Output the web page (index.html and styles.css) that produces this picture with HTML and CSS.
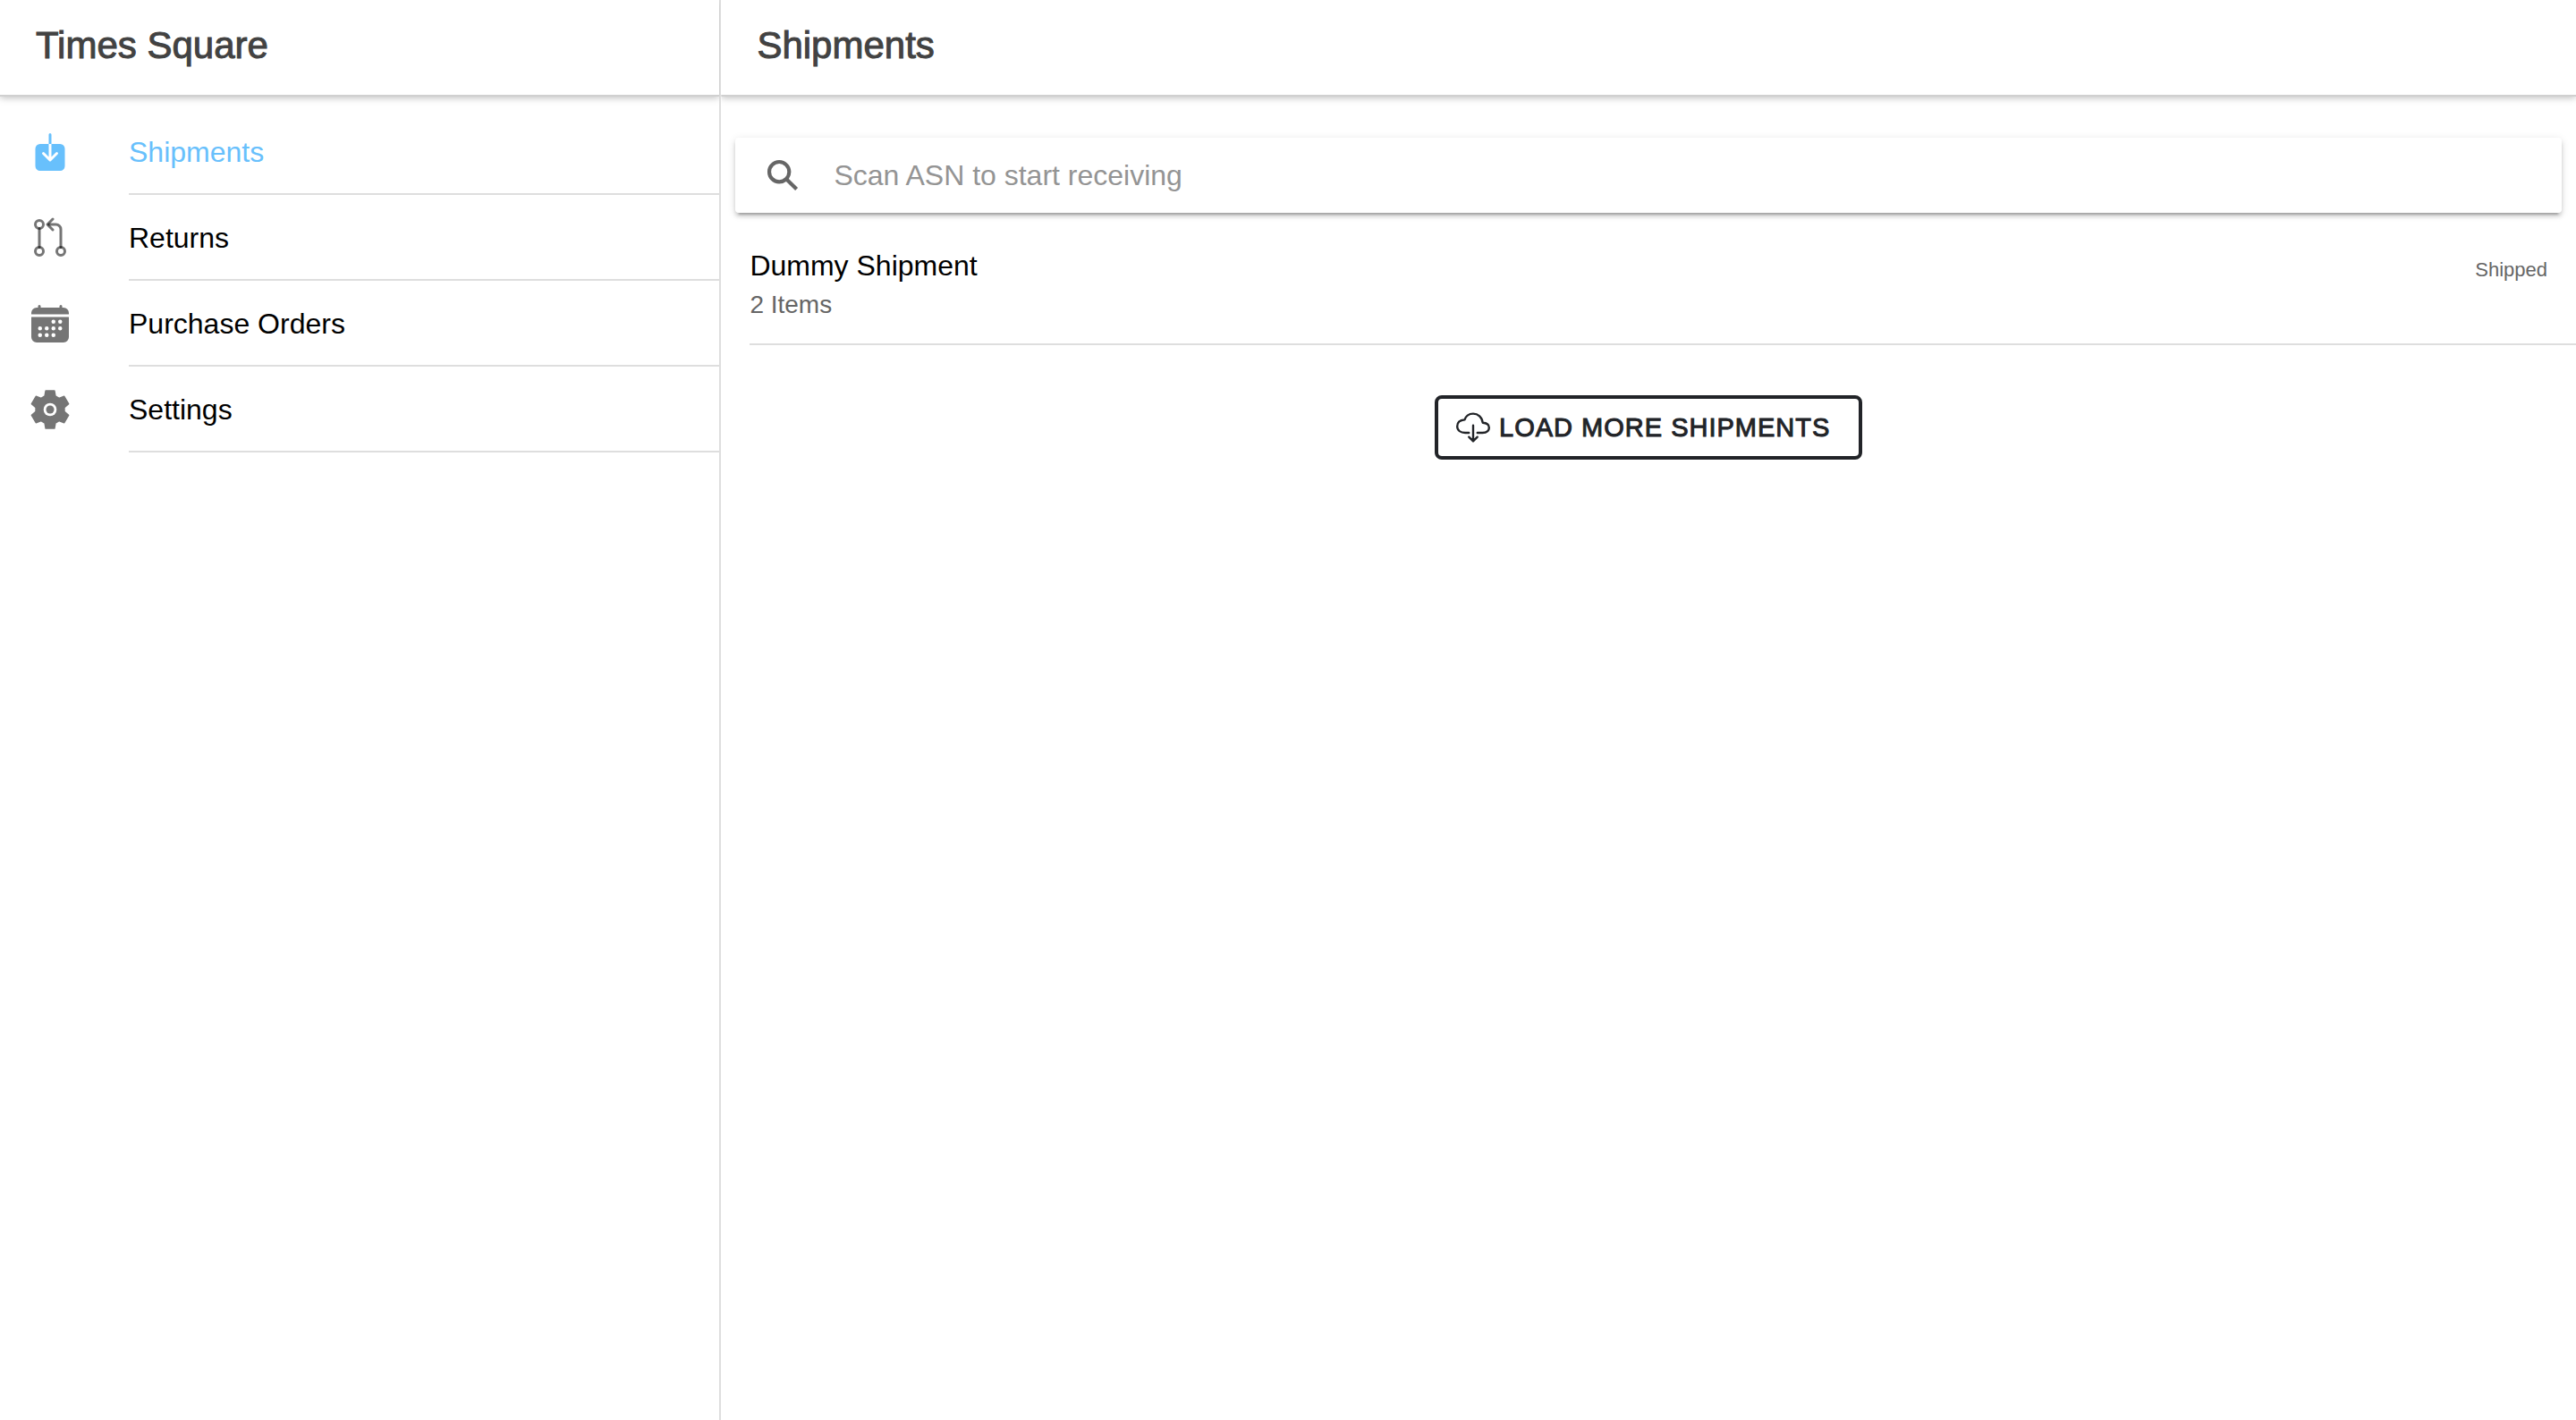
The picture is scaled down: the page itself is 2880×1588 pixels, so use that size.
FILE: index.html
```html
<!DOCTYPE html>
<html lang="en">
<head>
<meta charset="utf-8">
<meta name="viewport" content="width=device-width, initial-scale=1">
<title>Shipments</title>
<link rel="stylesheet" href="styles.css">
</head>
<body>
<div class="app">
  <aside class="sidebar">
    <header class="toolbar"><h2 class="toolbar-title">Times Square</h2></header>
    <nav class="menu">
      <a class="menu-item menu-item-active" href="#shipments">
        <svg class="menu-icon" viewBox="0 0 512 512" fill="currentColor" aria-hidden="true"><path d="M376 160H272v153.37l52.69-52.68a16 16 0 0122.62 22.62l-80 80a16 16 0 01-22.62 0l-80-80a16 16 0 0122.62-22.62L240 313.37V160H136a56.06 56.06 0 00-56 56v208a56.06 56.06 0 0056 56h240a56.06 56.06 0 0056-56V216a56.06 56.06 0 00-56-56zM272 48a16 16 0 00-32 0v112h32z"/></svg>
        <span class="menu-label">Shipments</span>
      </a>
      <a class="menu-item" href="#returns">
        <svg class="menu-icon" viewBox="0 0 512 512" fill="none" stroke="currentColor" stroke-width="32" stroke-linecap="round" stroke-linejoin="round" aria-hidden="true"><circle cx="128" cy="416" r="48"/><path d="M128 144v224"/><path d="M288 160l-64-64 64-64"/><circle cx="128" cy="96" r="48"/><circle cx="384" cy="416" r="48"/><path d="M240 96h84a60 60 0 0160 60v212"/></svg>
        <span class="menu-label">Returns</span>
      </a>
      <a class="menu-item" href="#purchase-orders">
        <svg class="menu-icon" viewBox="0 0 512 512" fill="currentColor" aria-hidden="true"><path fill-rule="evenodd" d="M480 128a64 64 0 00-64-64h-16V48.45c0-8.61-6.62-16-15.23-16.43A16 16 0 00368 48v16H144V48.45c0-8.61-6.62-16-15.23-16.43A16 16 0 00112 48v16H96a64 64 0 00-64 64v12a4 4 0 004 4h440a4 4 0 004-4zM32 416a64 64 0 0064 64h320a64 64 0 0064-64V179a3 3 0 00-3-3H35a3 3 0 00-3 3zM376 208a24 24 0 110 48 24 24 0 010-48zM296 208a24 24 0 110 48 24 24 0 010-48zM376 288a24 24 0 110 48 24 24 0 010-48zM296 288a24 24 0 110 48 24 24 0 010-48zM216 288a24 24 0 110 48 24 24 0 010-48zM136 288a24 24 0 110 48 24 24 0 010-48zM296 368a24 24 0 110 48 24 24 0 010-48zM216 368a24 24 0 110 48 24 24 0 010-48zM136 368a24 24 0 110 48 24 24 0 010-48z"/></svg>
        <span class="menu-label">Purchase Orders</span>
      </a>
      <a class="menu-item" href="#settings">
        <svg class="menu-icon" viewBox="0 0 512 512" fill="#757575" aria-hidden="true"><path stroke="#757575" stroke-width="16" stroke-linejoin="round" d="M193 96L204 32H308L319 96L363 121L424 99L476 189L426 231V281L476 323L424 413L363 391L319 416L308 480H204L193 416L149 391L88 413L36 323L86 281V231L36 189L88 99L149 121Z"/><circle cx="256" cy="256" r="78" fill="#fff"/><circle cx="256" cy="256" r="48"/></svg>
        <span class="menu-label">Settings</span>
      </a>
    </nav>
  </aside>
  <main class="main">
    <header class="toolbar"><h1 class="toolbar-title">Shipments</h1></header>
    <label class="search">
      <svg class="search-icon" viewBox="0 0 512 512" fill="currentColor" aria-hidden="true"><path d="M464 428L339.92 303.9a160.48 160.48 0 0030.72-94.58C370.64 120.37 298.27 48 209.32 48S48 120.37 48 209.32s72.37 161.32 161.32 161.32a160.48 160.48 0 0094.58-30.72L428 464zM209.32 319.69a110.38 110.38 0 11110.37-110.37 110.5 110.5 0 01-110.37 110.37z"/></svg>
      <input class="search-input" type="search" placeholder="Scan ASN to start receiving" aria-label="Scan ASN to start receiving">
    </label>
    <section class="shipment">
      <div class="shipment-text">
        <h3 class="shipment-name">Dummy Shipment</h3>
        <p class="shipment-count">2 Items</p>
      </div>
      <span class="shipment-status">Shipped</span>
    </section>
    <button class="load-more" type="button">
      <svg class="load-icon" viewBox="0 0 512 512" fill="none" stroke="currentColor" stroke-width="32" stroke-linecap="round" stroke-linejoin="round" aria-hidden="true"><path d="M320 336h76c55 0 100-21.21 100-75.6s-53-73.47-96-75.6C391.11 99.74 329 48 256 48c-69 0-113.44 45.79-128 91.2-60 5.7-112 35.88-112 98.4S70 336 136 336h56M192 400.1l64 63.9 64-63.9M256 224v224.03"/></svg>
      Load more shipments
    </button>
  </main>
</div>
</body>
</html>
```
FILE: styles.css
```css
* {
  box-sizing: border-box;
}

body {
  margin: 0;
  background: #fff;
  color: #000;
  font-family: "Liberation Sans", Arial, sans-serif;
  font-size: 32px;
}

h1, h2, h3, p {
  margin: 0;
  font-weight: 400;
}

.app {
  display: grid;
  grid-template-columns: 28% 1fr;
  min-height: 100vh;
}

.sidebar {
  border-right: 2px solid #dedede;
}

.main {
  display: flex;
  flex-direction: column;
}

.toolbar {
  display: flex;
  align-items: center;
  height: 106px;
  padding: 0 40px 4px;
  box-shadow: 0 2px 0 #d0d0d0, 0 3px 8px rgba(0, 0, 0, 0.28);
  clip-path: inset(0 0 -16px 0);
}

.toolbar-title {
  color: #424242;
  font-size: 42px;
  line-height: 48px;
  -webkit-text-stroke: 1px #424242;
}

.menu {
  padding-top: 16px;
}

.menu-item {
  display: flex;
  align-items: center;
  gap: 64px;
  padding-left: 32px;
  color: rgba(0, 0, 0, 0.54);
  text-decoration: none;
}

.menu-icon {
  flex: none;
  width: 48px;
  height: 48px;
}

.menu-label {
  flex: 1;
  padding: 28px 0 26px;
  border-bottom: 2px solid #dedede;
  color: #000;
  line-height: 40px;
}

.menu-item-active,
.menu-item-active .menu-label {
  color: #68c0fc;
}

.search {
  display: flex;
  align-items: center;
  gap: 36px;
  height: 84px;
  margin: 48px 16px 0;
  padding: 0 32px;
  border-radius: 4px;
  background: #fff;
  box-shadow: 0 4px 4px rgba(0, 0, 0, 0.14), 0 6px 2px -4px rgba(0, 0, 0, 0.2), 0 2px 10px rgba(0, 0, 0, 0.12);
}

.search-icon {
  flex: none;
  width: 42px;
  height: 42px;
  color: #666;
}

.search-input {
  flex: 1;
  min-width: 0;
  padding: 0;
  border: 0;
  outline: 0;
  background: none;
  color: #000;
  font: inherit;
}

.search-input::placeholder {
  color: #949494;
}

.shipment {
  display: flex;
  justify-content: space-between;
  margin-left: 32px;
  padding: 38px 32px 22px 0;
  border-bottom: 2px solid #dedede;
}

.shipment-name {
  font-size: 32px;
  line-height: 42px;
}

.shipment-count {
  padding-top: 2px;
  color: #666;
  font-size: 28px;
  line-height: 42px;
}

.shipment-status {
  padding-top: 12px;
  color: #666;
  font-size: 22px;
  line-height: 28px;
}

.load-more {
  display: flex;
  align-items: center;
  align-self: center;
  gap: 10px;
  height: 72px;
  margin-top: 56px;
  padding: 0 32px 0 20px;
  border: 4px solid #222428;
  border-radius: 8px;
  background: #fff;
  color: #222428;
  font: 29px "Liberation Sans", Arial, sans-serif;
  letter-spacing: 1px;
  text-transform: uppercase;
  -webkit-text-stroke: 1px #222428;
}

.load-icon {
  flex: none;
  width: 38px;
  height: 38px;
}
```
